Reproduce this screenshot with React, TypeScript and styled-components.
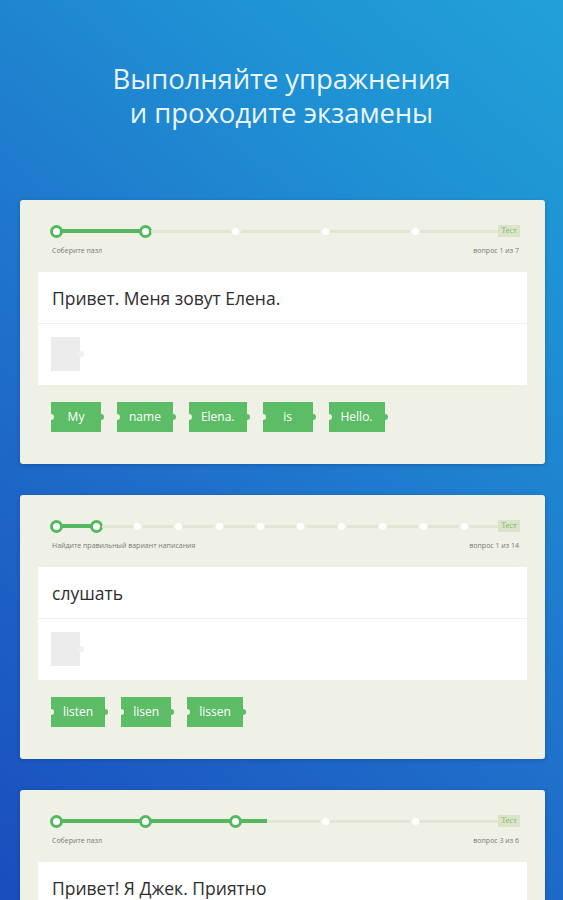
import React from 'react'
import styled, { createGlobalStyle } from 'styled-components'

const GlobalStyle = createGlobalStyle`
  html, body {
    margin: 0;
    padding: 0;
    height: 900px;
    overflow: hidden;
  }
  body {
    font-family: 'Open Sans', 'Noto Sans', sans-serif;
    background: #1f6fcb;
  }
`

const GREEN = '#53b85e'
const CARD_BG = '#eff1e7'

const Screen = styled.div`
  height: 900px;
  overflow: hidden;
  background: linear-gradient(40deg, #1a4dbe 0%, #1f72cb 45%, #1f93d4 80%, #22a0d8 100%);
`

const Header = styled.header`
  height: 200px;
  box-sizing: border-box;
  padding-top: 62px;
  text-align: center;
`

const Title = styled.h1`
  margin: 0;
  font-family: 'Open Sans', 'Noto Sans', sans-serif;
  font-weight: 400;
  font-size: 27.5px;
  line-height: 34px;
  color: rgba(255, 255, 255, 0.93);
  letter-spacing: -0.1px;
`

const Cards = styled.div`
  display: flex;
  flex-direction: column;
  gap: 31px;
  padding: 0 18px 0 20px;
`

const Card = styled.section`
  background: ${CARD_BG};
  border-radius: 3px;
  padding: 24px 18px 32px;
  box-shadow: 0 1px 4px rgba(0, 20, 80, 0.25);
`

const Track = styled.div`
  display: flex;
  align-items: center;
  height: 14px;
  margin: 0 7px 0 11px;
`

const DotBox = styled.div`
  width: 14px;
  height: 14px;
  flex: none;
  display: flex;
  align-items: center;
  justify-content: center;
`

const Dot = styled.span<{ $active?: boolean }>`
  box-sizing: border-box;
  border-radius: 50%;
  background: #fff;
  width: ${({ $active }) => ($active ? '13px' : '7px')};
  height: ${({ $active }) => ($active ? '13px' : '7px')};
  border: ${({ $active }) => ($active ? `3px solid ${GREEN}` : 'none')};
`

const Segment = styled.div`
  flex: 1;
  height: 3px;
  background: #e2e6d3;
  display: flex;
  margin: 0 -2px;
`

const Fill = styled.div`
  height: 4px;
  margin-top: -0.5px;
  background: ${GREEN};
`

const Badge = styled.span`
  flex: none;
  width: 22px;
  height: 12px;
  background: #dbe4ca;
  color: #7dba67;
  font-family: 'Liberation Serif', serif;
  font-size: 8px;
  line-height: 12px;
  text-align: center;
`

const Labels = styled.div`
  display: flex;
  justify-content: space-between;
  margin: 8px 8px 0 14px;
  font-size: 7px;
  line-height: 10px;
  color: #7a7a72;
`

const Panel = styled.div`
  margin-top: 16px;
  background: #fff;
`

const Question = styled.div`
  height: 52px;
  box-sizing: border-box;
  padding: 0 14px;
  display: flex;
  align-items: center;
  border-bottom: 1px solid #f0f1ea;
  font-size: 17.5px;
  color: #2e2e2e;
`

const Answer = styled.div`
  height: 61px;
  box-sizing: border-box;
  padding: 13px 13px 0;
`

const Slot = styled.div`
  position: relative;
  width: 29px;
  height: 34px;
  background: #ececec;
  &::after {
    content: '';
    position: absolute;
    right: -4px;
    top: 14px;
    width: 6px;
    height: 6px;
    border-radius: 50%;
    background: #f1f1f1;
  }
`

const Words = styled.div`
  display: flex;
  gap: 16px;
  margin-top: 17px;
  padding-left: 13px;
`

const Piece = styled.div`
  position: relative;
  height: 30px;
  padding: 0 12px;
  min-width: 26px;
  background: #5dbc66;
  color: #fff;
  font-size: 12px;
  line-height: 30px;
  text-align: center;
  &::before {
    content: '';
    position: absolute;
    left: -3px;
    top: 12px;
    width: 6px;
    height: 6px;
    border-radius: 50%;
    background: ${CARD_BG};
  }
  &::after {
    content: '';
    position: absolute;
    right: -3px;
    top: 12px;
    width: 6px;
    height: 6px;
    border-radius: 50%;
    background: #5dbc66;
  }
`

type Exercise = {
  dots: number
  active: number
  fills: number[]
  task: string
  counter: string
  question: string
  words?: string[]
}

const exercises: Exercise[] = [
  {
    dots: 5,
    active: 2,
    fills: [1],
    task: 'Соберите пазл',
    counter: 'вопрос 1 из 7',
    question: 'Привет. Меня зовут Елена.',
    words: ['My', 'name', 'Elena.', 'is', 'Hello.'],
  },
  {
    dots: 11,
    active: 2,
    fills: [1],
    task: 'Найдите правильный вариант написания',
    counter: 'вопрос 1 из 14',
    question: 'слушать',
    words: ['listen', 'lisen', 'lissen'],
  },
  {
    dots: 5,
    active: 3,
    fills: [1, 1, 0.33],
    task: 'Соберите пазл',
    counter: 'вопрос 3 из 6',
    question: 'Привет! Я Джек. Приятно',
  },
]

function Progress({ dots, active, fills }: { dots: number; active: number; fills: number[] }) {
  const items: React.ReactNode[] = []
  for (let i = 0; i < dots; i++) {
    items.push(
      <DotBox key={`d${i}`}>
        <Dot $active={i < active} />
      </DotBox>
    )
    const f = fills[i] || 0
    items.push(
      <Segment key={`s${i}`}>
        {f > 0 && <Fill style={{ width: `${f * 100}%` }} />}
      </Segment>
    )
  }
  return (
    <Track>
      {items}
      <Badge>Тест</Badge>
    </Track>
  )
}

function ExerciseCard({ ex }: { ex: Exercise }) {
  return (
    <Card>
      <Progress dots={ex.dots} active={ex.active} fills={ex.fills} />
      <Labels>
        <span>{ex.task}</span>
        <span>{ex.counter}</span>
      </Labels>
      <Panel>
        <Question>{ex.question}</Question>
        <Answer>
          <Slot />
        </Answer>
      </Panel>
      {ex.words && (
        <Words>
          {ex.words.map((w) => (
            <Piece key={w}>{w}</Piece>
          ))}
        </Words>
      )}
    </Card>
  )
}

export default function App() {
  return (
    <Screen>
      <GlobalStyle />
      <Header>
        <Title>
          Выполняйте упражнения
          <br />и проходите экзамены
        </Title>
      </Header>
      <Cards>
        {exercises.map((ex) => (
          <ExerciseCard key={ex.counter} ex={ex} />
        ))}
      </Cards>
    </Screen>
  )
}
